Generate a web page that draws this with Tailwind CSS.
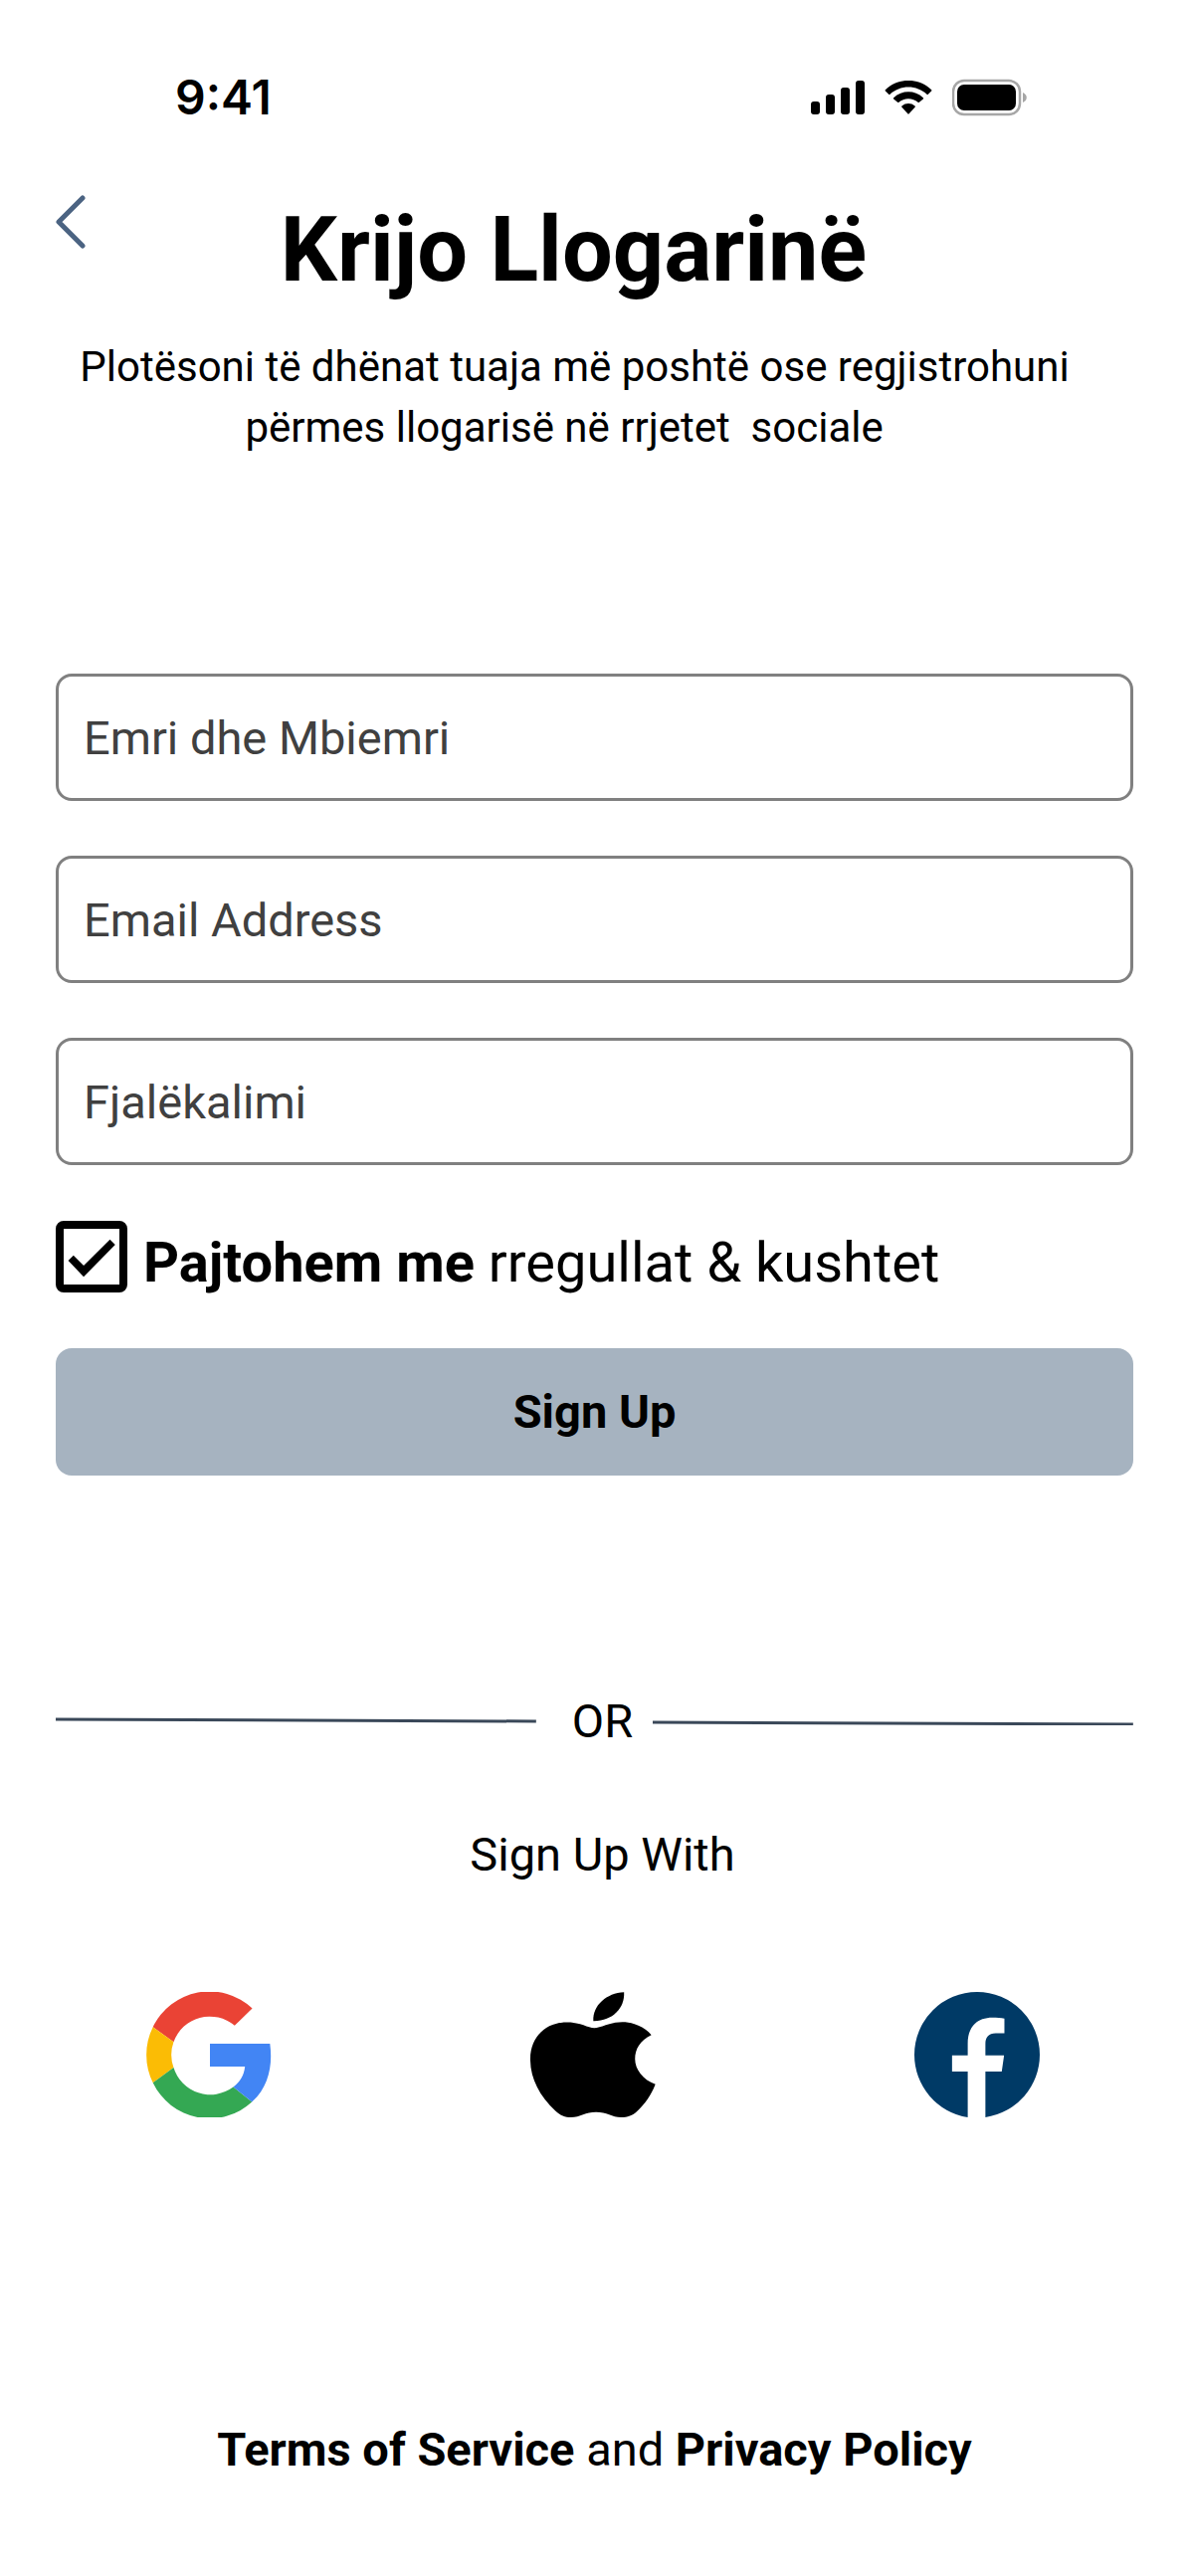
<!DOCTYPE html>
<html lang="sq">
<head>
  <meta charset="UTF-8" />
  <meta name="viewport" content="width=device-width, initial-scale=1.0" />
  <title>Krijo Llogarinë</title>
  <script src="https://cdn.jsdelivr.net/npm/@tailwindcss/browser@4"></script>
</head>
<body class="bg-white text-black font-['Roboto',sans-serif] text-[47px] leading-14">

  <!-- Status bar -->
  <div class="flex items-center justify-between pt-[70px] pl-[176px] pr-[162px]">
    <span class="font-['Inter',sans-serif] text-5xl leading-14 font-semibold">9:41</span>
    <div class="flex items-center gap-5">
      <svg class="w-[54px] h-[34px]" viewBox="0 0 54 34" aria-hidden="true">
        <rect x="0" y="21" width="9" height="13" rx="3" />
        <rect x="15" y="14" width="9" height="20" rx="3" />
        <rect x="30" y="7" width="9" height="27" rx="3" />
        <rect x="45" y="0" width="9" height="34" rx="3" />
      </svg>
      <svg class="w-12 h-[34px]" viewBox="329 66 142 103" aria-hidden="true">
        <path d="M400 86C421 86 441 94 456 108Q458 110 460 108L470 98Q472 96 470 94C430 56 370 56 330 94Q328 96 330 98L340 108Q342 110 344 108C359 94 379 86 400 86Z" />
        <path d="M400 121C411 121 421 125 429 132Q431 134 433 132L445 122Q447 120 445 118C419 94 381 94 355 118Q353 120 355 122L367 132Q369 134 371 132C379 125 389 121 400 121Z" />
        <path d="M420 147Q422 145 420 143C408 133 392 133 380 143Q378 145 380 147L398 167Q400 169 402 167Z" />
      </svg>
      <svg class="w-[76px] h-[38px]" viewBox="0 0 76 38" aria-hidden="true">
        <rect x="1" y="2" width="67" height="34" rx="11" fill="none" stroke="#a6a6a6" stroke-width="2.5" />
        <rect x="5" y="6" width="59" height="26" rx="7" />
        <path d="M71 14C76 16 76 22 71 24Z" fill="#a6a6a6" />
      </svg>
    </div>
  </div>

  <main class="px-14">

    <!-- Header -->
    <header class="pt-[70px]">
      <div class="flex items-start">
        <a href="#" aria-label="Kthehu">
          <svg class="w-[30px] h-[54px]" viewBox="0 0 30 54" fill="none" stroke="#4b6382" stroke-width="5" stroke-linecap="round" stroke-linejoin="round" aria-hidden="true">
            <path d="M27 3L3 27L27 51" />
          </svg>
        </a>
        <h1 class="flex-1 pt-1 pr-[72px] text-center text-[90px] leading-[104px] font-bold">Krijo Llogarinë</h1>
      </div>
      <p class="pt-[34px] pr-10 text-center text-[42px] leading-[61px]">Plotësoni të dhënat tuaja më poshtë ose regjistrohuni<br>përmes llogarisë në rrjetet&nbsp; sociale&nbsp;&nbsp;</p>
    </header>

    <!-- Sign up form -->
    <form class="flex flex-col gap-14 pt-[217px]">
      <div class="flex flex-col gap-[55px]">
        <input type="text" aria-label="Emri dhe Mbiemri" placeholder="Emri dhe Mbiemri" class="w-full h-32 px-[25px] border-3 border-[#808080] rounded-2xl placeholder:text-[#404040] focus:outline-none">
        <input type="email" aria-label="Email Address" placeholder="Email Address" class="w-full h-32 px-[25px] border-3 border-[#808080] rounded-2xl placeholder:text-[#404040] focus:outline-none">
        <input type="password" aria-label="Fjalëkalimi" placeholder="Fjalëkalimi" class="w-full h-32 px-[25px] border-3 border-[#808080] rounded-2xl placeholder:text-[#404040] focus:outline-none">
      </div>

      <div class="flex items-center gap-4">
        <div class="grid">
          <input id="terms" type="checkbox" checked class="peer [grid-area:1/1] size-[72px] appearance-none border-8 border-black rounded-lg">
          <svg class="[grid-area:1/1] size-[72px] pointer-events-none invisible peer-checked:visible" viewBox="166 622 218 218" aria-hidden="true">
            <path d="M204 743L220 727L251 758L331 679L347 695L251 792Z" />
          </svg>
        </div>
        <label for="terms" class="pt-3 text-[56px] leading-15"><b>Pajtohem me</b> rregullat &amp; kushtet</label>
      </div>

      <button type="submit" class="w-full h-32 rounded-2xl bg-[#a6b3c0] font-bold">Sign Up</button>
    </form>

    <!-- Divider -->
    <div class="flex items-center pt-[219px]">
      <svg class="flex-1 h-2" viewBox="0 0 483 8" preserveAspectRatio="none" stroke="#3a4859" stroke-width="3" aria-hidden="true"><path d="M0 2L483 4" /></svg>
      <span class="pl-9 pr-5">OR</span>
      <svg class="flex-1 h-2" viewBox="0 0 483 8" preserveAspectRatio="none" stroke="#3a4859" stroke-width="3" aria-hidden="true"><path d="M0 5L483 7" /></svg>
    </div>

    <!-- Social sign up -->
    <p class="pt-[78px] pl-4 text-center">Sign Up With</p>
    <div class="flex justify-between pt-[110px] pl-[91px] pr-[94px]">
      <a href="#" aria-label="Google">
        <svg class="size-[126px]" viewBox="52 67 376 376" aria-hidden="true">
          <path fill="#ea4335" d="M370 116A188 188 0 0 0 72 172L134 217A115 115 0 0 1 317 168Z" />
          <path fill="#fbbc05" d="M72 172A188 188 0 0 0 72 339L134 294A115 115 0 0 1 134 217Z" />
          <path fill="#34a853" d="M72 339A188 188 0 0 0 369 397L313 352A115 115 0 0 1 134 294Z" />
          <path fill="#4285f4" d="M243 222H423C432 290 418 352 369 397L313 352C334 337 345 317 348 291H243Z" />
        </svg>
      </a>
      <a href="#" aria-label="Apple">
        <svg class="size-[126px]" viewBox="54 67 376 376" aria-hidden="true">
          <path d="M335 68C338 116 300 155 243 154C240 108 283 70 335 68Z" />
          <path d="M246 175C264 175 291 157 330 157C362 157 397 171 417 196C383 213 368 238 368 268C368 300 392 331 429 344C416 378 397 404 374 425C361 437 346 443 326 443C299 442 283 427 251 427C220 427 204 442 176 443C158 443 144 437 130 424C82 380 55 327 54 272C53 199 103 157 165 158C206 158 226 175 246 175Z" />
        </svg>
      </a>
      <a href="#" aria-label="Facebook">
        <svg class="size-[126px]" viewBox="58 67 376 376" aria-hidden="true">
          <path fill="#003a66" d="M218 443V306H171V257H218V222C218 171 246 144 292 144C305 144 318 145 328 147V191H302C280 191 271 204 271 222V257H327L320 306H271V443A190 190 0 0 0 434 255A188 188 0 0 0 58 255A190 190 0 0 0 218 443Z" />
        </svg>
      </a>
    </div>

    <!-- Footer -->
    <footer class="pt-[306px] pb-10 text-center">
      <a href="#" class="font-bold">Terms of Service</a> and <a href="#" class="font-bold">Privacy Policy</a>
    </footer>
  </main>

</body>
</html>
